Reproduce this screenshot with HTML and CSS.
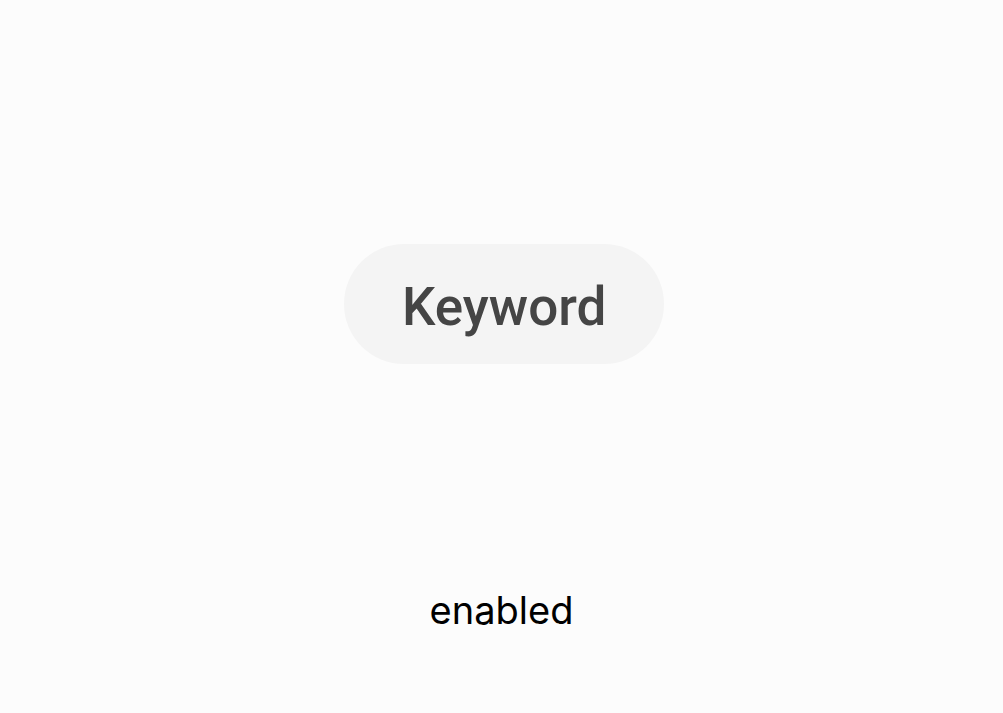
FILE: index.html
```html
<!DOCTYPE html>
<html>
<head>
<meta charset="utf-8">
<link rel="stylesheet" href="styles.css">
</head>
<body>
<main class="stage">
  <div class="chip">Keyword</div>
  <div class="label">enabled</div>
</main>
</body>
</html>
```
FILE: styles.css
```css
html, body {
  margin: 0;
  padding: 0;
  background: #fcfcfc;
}
.stage {
  height: 713px;
  display: flex;
  flex-direction: column;
  align-items: center;
  padding-top: 244px;
  box-sizing: border-box;
}
.chip {
  box-sizing: border-box;
  width: 320px;
  height: 120px;
  margin-left: 5px;
  padding: 32px 58px 26px;
  border-radius: 60px;
  background: #f4f4f4;
  color: #454545;
  font-family: Roboto, "Noto Sans", sans-serif;
  font-size: 53px;
  font-weight: 500;
  line-height: 62px;
  text-align: center;
  white-space: nowrap;
}
.label {
  margin-top: 223px;
  font-family: Inter, "Noto Sans", sans-serif;
  font-size: 38px;
  line-height: 46px;
  color: #000000;
}
```
